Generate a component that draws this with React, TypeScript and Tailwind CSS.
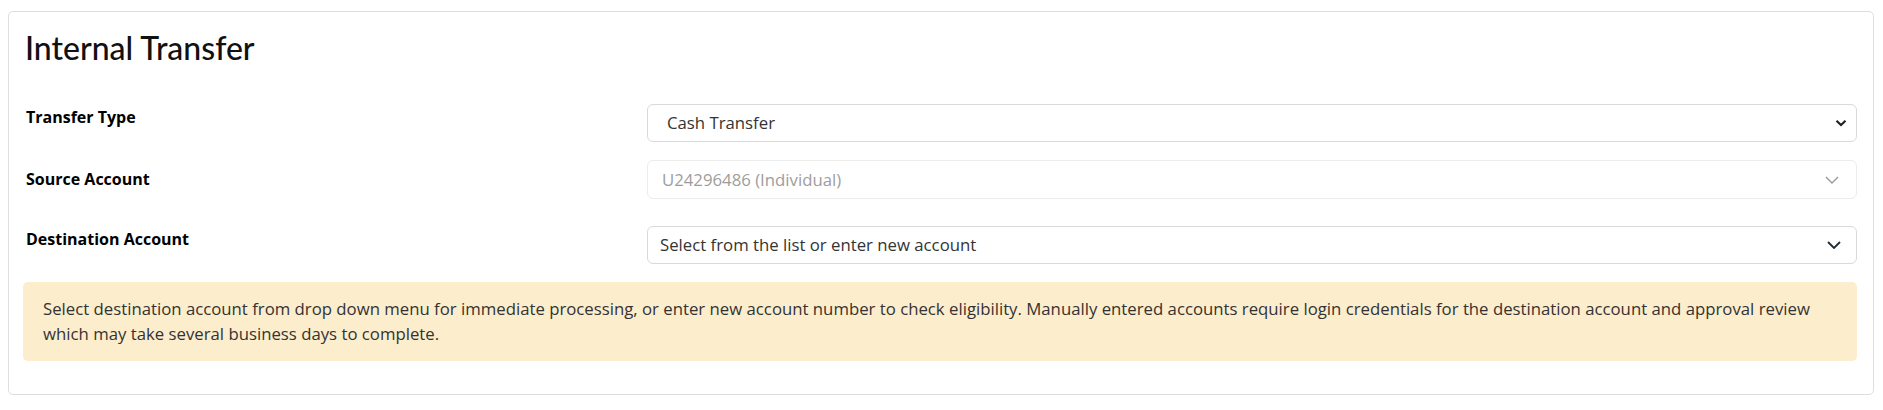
import React from 'react';

const body = { fontFamily: '"Open Sans", Arial, sans-serif' };
const heading = { fontFamily: 'Lato, Arial, sans-serif' };

function Chevron({ kind }: { kind: 'native' | 'muted' | 'dark' }) {
    if (kind === 'native') {
        return (
            <svg width="12" height="8" viewBox="0 0 12 8" className="shrink-0">
                <path d="M1.5 1.8 L6 6 L10.5 1.8" fill="none" stroke="#222" strokeWidth="2.2" />
            </svg>
        );
    }
    const color = kind === 'muted' ? '#9a9a9a' : '#1f2a36';
    return (
        <svg width="14" height="8" viewBox="0 0 14 8" className="shrink-0">
            <path d="M1 1 L7 7 L13 1" fill="none" stroke={color} strokeWidth={kind === 'muted' ? 1.4 : 1.8} />
        </svg>
    );
}

function App() {
    return (
        <div className="bg-white w-[1883px] h-[410px] pl-2 pr-[9px] pt-[11px]" style={body}>
            <div className="border border-[#dedede] rounded-[5px] h-[384px] pl-[14px] pr-4 pt-[17px]">
                <h1 className="text-[32px] leading-[38px] font-medium text-[#111] pl-[2px]" style={heading}>Internal Transfer</h1>

                <div className="flex mt-[37px]">
                    <div className="w-[624px] pl-[3px] pt-[1px] text-[16px] leading-[24px] font-bold text-black">Transfer Type</div>
                    <div className="flex-1 h-[38px] border border-[#d9d9d9] rounded-[6px] flex items-center justify-between pl-[19px] pr-[9px] text-[16.75px] text-[#333]">
                        <span>Cash Transfer</span>
                        <Chevron kind="native" />
                    </div>
                </div>

                <div className="flex mt-[18px]">
                    <div className="w-[624px] pl-[3px] pt-[7px] text-[16px] leading-[24px] font-bold text-black">Source Account</div>
                    <div className="flex-1 h-[39px] border border-[#ececec] rounded-[6px] flex items-center justify-between pl-[14px] pr-[17px] text-[16.75px] text-[#9d9d9d]">
                        <span>U24296486 (Individual)</span>
                        <Chevron kind="muted" />
                    </div>
                </div>

                <div className="flex mt-[27px]">
                    <div className="w-[624px] pl-[3px] pt-[1px] text-[16px] leading-[24px] font-bold text-black">Destination Account</div>
                    <div className="flex-1 h-[38px] border border-[#d9d9d9] rounded-[6px] flex items-center justify-between pl-[12px] pr-[15px] text-[16.75px] text-[#333]">
                        <span>Select from the list or enter new account</span>
                        <Chevron kind="dark" />
                    </div>
                </div>

                <div className="mt-[18px] h-[79px] bg-[#fcedcc] rounded-[5px] pl-5 pr-5 pt-[14px] text-[16.75px] leading-[25px] text-[#333]">
                    Select destination account from drop down menu for immediate processing, or enter new account number to check eligibility. Manually entered accounts require login credentials for the destination account and approval review which may take several business days to complete.
                </div>
            </div>
        </div>
    );
}

export default App;
